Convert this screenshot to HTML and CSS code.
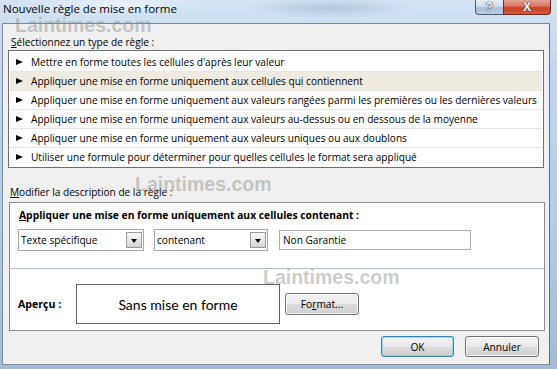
FILE: index.html
```html
<!DOCTYPE html>
<html lang="fr">
<head>
<meta charset="utf-8">
<title>Nouvelle règle de mise en forme</title>
<link rel="stylesheet" href="styles.css">
</head>
<body>
<div class="window">
  <div class="titlebar">
    <span class="title">Nouvelle règle de mise en forme</span>
    <div class="caption-btns">
      <div class="cbtn help">?</div>
      <div class="cbtn close">X</div>
    </div>
  </div>
  <div class="client">
    <div class="label"><u>S</u>électionnez un type de règle :</div>
    <ul class="rule-list">
      <li><span class="tri"></span>Mettre en forme toutes les cellules d'après leur valeur</li>
      <li class="sel"><span class="tri"></span>Appliquer une mise en forme uniquement aux cellules qui contiennent</li>
      <li><span class="tri"></span>Appliquer une mise en forme uniquement aux valeurs rangées parmi les premières ou les dernières valeurs</li>
      <li><span class="tri"></span>Appliquer une mise en forme uniquement aux valeurs au-dessus ou en dessous de la moyenne</li>
      <li><span class="tri"></span>Appliquer une mise en forme uniquement aux valeurs uniques ou aux doublons</li>
      <li><span class="tri"></span>Utiliser une formule pour déterminer pour quelles cellules le format sera appliqué</li>
    </ul>
    <div class="label label2"><u>M</u>odifier la description de la règle :</div>
    <div class="desc">
      <div class="desc-top">
        <div class="desc-title"><u>A</u>ppliquer une mise en forme uniquement aux cellules contenant :</div>
        <div class="controls">
          <div class="combo combo1"><span class="ctext">Texte spécifique</span><span class="arrow-btn"></span></div>
          <div class="combo combo2"><span class="ctext">contenant</span><span class="arrow-btn"></span></div>
          <div class="textbox">Non Garantie</div>
        </div>
      </div>
      <div class="desc-bottom">
        <span class="apercu">Aperçu :</span>
        <div class="preview">Sans mise en forme</div>
        <button class="btn fmt">Fo<u>r</u>mat...</button>
      </div>
    </div>
    <div class="footer">
      <button class="btn ok">OK</button>
      <button class="btn cancel">Annuler</button>
    </div>
  </div>
  <div class="wm wm1">Laintimes.com</div>
  <div class="wm wm2">Laintimes.com</div>
  <div class="wm wm3">Laintimes.com</div>
</div>
</body>
</html>
```

FILE: styles.css
```css
* { box-sizing: border-box; margin: 0; padding: 0; }

body {
  margin: 0;
  width: 557px;
  height: 369px;
  overflow: hidden;
  font-family: "Open Sans", "Noto Sans", sans-serif;
  font-size: 10.1px;
  color: #000;
}

.window {
  position: relative;
  width: 557px;
  height: 369px;
  padding: 0 7px 4px 2px;
  display: flex;
  flex-direction: column;
  background:
    radial-gradient(ellipse 90px 12px at 120px 4px, rgba(255,255,255,0.55), rgba(255,255,255,0) 100%),
    radial-gradient(ellipse 80px 10px at 330px 8px, rgba(120,150,185,0.35), rgba(120,150,185,0) 100%),
    linear-gradient(to bottom, #d3e3f4 0%, #c0d6ee 20%, #b3cce7 60%, #9fbcdc 100%);
}

/* Title bar */
.titlebar {
  height: 23px;
  display: flex;
  justify-content: space-between;
  align-items: flex-start;
}

.title {
  font-size: 11.5px;
  line-height: 18px;
  padding-left: 1px;
  color: #000;
}

.caption-btns {
  display: flex;
  margin-right: -1px;
}

.cbtn {
  height: 15px;
  display: flex;
  align-items: center;
  justify-content: center;
  font-family: "Liberation Sans", sans-serif;
  font-weight: bold;
  color: #fff;
  font-size: 12px;
  line-height: 1;
  text-shadow: 0 0 1px #333, 0 0 1px #333, 0 0 1px #333;
  border: 1px solid #4d5c6e;
  border-top: none;
}

.cbtn.help {
  width: 28px;
  border-radius: 0 0 0 4px;
  border-right: none;
  background: linear-gradient(to bottom, #e6eef7 0%, #cfdcea 45%, #a8bdd5 55%, #bccfe4 100%);
}

.cbtn.close {
  width: 48px;
  border-radius: 0 0 4px 0;
  border-color: #6b2a20;
  font-size: 12px;
  background: linear-gradient(to bottom, #e8a696 0%, #d77462 45%, #c4402a 55%, #d75b3c 100%);
}

/* Client area */
.client {
  flex: 1;
  background: #f0f0f0;
  border: 1px solid #7f8893;
  border-right-color: #6a6a6a;
  border-bottom-color: #8a8a8a;
  display: flex;
  flex-direction: column;
}

.label {
  margin-top: 11px;
  padding-left: 8px;
  line-height: 15px;
  height: 15px;
}

.label2 {
  margin-top: 17px;
  padding-left: 7px;
}

.rule-list {
  list-style: none;
  width: 536px;
  height: 118px;
  margin-left: 5px;
  border: 1px solid #707070;
  background: #fff;
  padding: 2px 1px 1px 1px;
}

.rule-list li {
  height: 19px;
  display: flex;
  align-items: center;
  padding-left: 6px;
  border-bottom: 1px solid #e6e6e6;
  white-space: nowrap;
}

.rule-list li:last-child {
  border-bottom: none;
  height: 18px;
}

.rule-list li.sel {
  background: #efebe0;
}

.tri {
  width: 0;
  height: 0;
  border-left: 7px solid #000;
  border-top: 3.5px solid transparent;
  border-bottom: 3.5px solid transparent;
  margin-right: 8px;
}

/* Description box */
.desc {
  margin-top: 2px;
  margin-left: 6px;
  width: 536px;
  height: 129px;
  border: 1px solid #8c8c8c;
  background: #fff;
  display: flex;
  flex-direction: column;
}

.desc-top {
  height: 66px;
  border-bottom: 1px solid #a9bed3;
  padding-top: 5px;
}

.desc-title {
  font-weight: bold;
  font-size: 10.3px;
  line-height: 15px;
  padding-left: 9px;
}

.controls {
  margin-top: 6px;
  display: flex;
  align-items: center;
  height: 22px;
  padding-left: 8px;
}

.combo {
  height: 22px;
  display: flex;
  align-items: center;
  border: 1px solid #a8a8a8;
  background: #fff;
  padding: 0 1px 0 2px;
}

.combo1 { width: 126px; }
.combo2 { width: 114px; margin-left: 10px; }

.ctext { flex: 1; }

.arrow-btn {
  width: 16px;
  height: 16px;
  border: 1px solid #9a9a9a;
  background: linear-gradient(to bottom, #f8f8f8 0%, #e8e8e8 50%, #d6d6d6 100%);
  display: flex;
  align-items: center;
  justify-content: center;
  padding-top: 2px;
}

.arrow-btn::after {
  content: "";
  width: 0;
  height: 0;
  border-top: 4px solid #000;
  border-left: 3.5px solid transparent;
  border-right: 3.5px solid transparent;
}

.textbox {
  margin-left: 11px;
  width: 192px;
  height: 20px;
  border: 1px solid #acacac;
  background: #fff;
  padding-left: 3px;
  line-height: 18px;
}

.desc-bottom {
  flex: 1;
  padding-top: 15px;
  display: flex;
  align-items: flex-start;
}

.desc-bottom > * { flex: none; }

.apercu {
  width: 66px;
  padding-left: 8px;
  height: 40px;
  line-height: 40px;
  font-weight: bold;
  font-size: 10.6px;
}

.preview {
  width: 204px;
  height: 40px;
  border: 1px solid #646464;
  background: #fff;
  display: flex;
  align-items: center;
  justify-content: center;
  font-family: "Lato", "Open Sans", sans-serif;
  font-size: 14px;
}

.btn {
  font-family: "Open Sans", "Noto Sans", sans-serif;
  font-size: 10.2px;
  color: #000;
  height: 21px;
  border: 1px solid #707070;
  border-radius: 3px;
  background: linear-gradient(to bottom, #f2f2f2 0%, #ebebeb 48%, #dddddd 52%, #cfcfcf 100%);
  box-shadow: inset 0 0 0 1px rgba(255,255,255,0.8);
  display: flex;
  align-items: center;
  justify-content: center;
}

.fmt {
  width: 74px;
  height: 22px;
  margin-left: 5px;
  margin-top: 9px;
}

.footer {
  margin-top: 5px;
  display: flex;
  justify-content: flex-end;
  gap: 11px;
  padding-right: 10px;
}

.ok {
  width: 73px;
  border-color: #3c7fb1;
  box-shadow: inset 0 0 0 1px rgba(120, 210, 250, 0.7);
}

.cancel { width: 74px; }

/* Watermarks */
.wm {
  position: absolute;
  font-family: "Liberation Sans", sans-serif;
  font-weight: bold;
  font-size: 19.5px;
  line-height: 19.5px;
  color: rgba(130, 130, 130, 0.42);
  pointer-events: none;
  white-space: nowrap;
}

.wm1 { left: 15px; top: 16px; }
.wm2 { left: 135px; top: 175px; }
.wm3 { left: 263px; top: 268px; }
```
